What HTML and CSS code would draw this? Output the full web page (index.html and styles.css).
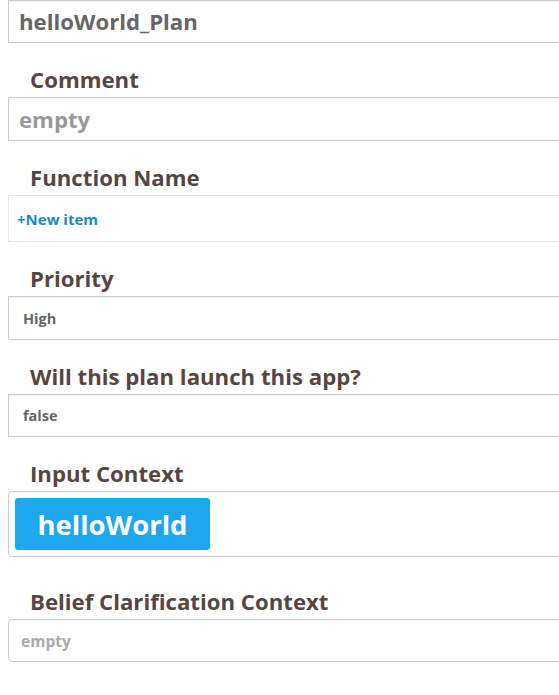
FILE: index.html
```html
<!DOCTYPE html>
<html lang="en">
<head>
    <meta charset="UTF-8">
    <title>Plan</title>
    <link rel="stylesheet" href="styles.css">
</head>
<body>
    <div class="plan-form">
        <div class="field big title">helloWorld_Plan</div>

        <div class="label">Comment</div>
        <div class="field big empty">empty</div>

        <div class="label">Function Name</div>
        <div class="field list">
            <a href="#" class="new-item">+New item</a>
        </div>

        <div class="label">Priority</div>
        <div class="field small tall">High</div>

        <div class="label">Will this plan launch this app?</div>
        <div class="field small">false</div>

        <div class="label">Input Context</div>
        <div class="field chips">
            <span class="chip">helloWorld</span>
        </div>

        <div class="label belief">Belief Clarification Context</div>
        <div class="field small empty rounded">empty</div>
    </div>
</body>
</html>
```

FILE: styles.css
```css
html, body {
    overflow: hidden;
}

body {
    margin: 0;
    padding: 0;
    font-family: 'Open Sans', sans-serif;
    font-weight: bold;
    background: #fff;
}

.plan-form {
    width: 620px;
    padding-left: 8px;
}

/* Labels */
.label {
    font-size: 22.2px;
    line-height: 28px;
    color: #574542;
    padding-left: 22px;
    margin-top: 23px;
    margin-bottom: 3px;
    white-space: nowrap;
}

.label.belief {
    margin-top: 31px;
}

/* Field boxes */
.field {
    box-sizing: border-box;
    border: 1px solid #cdcdcd;
    box-shadow: inset 0 1px 2px rgba(0, 0, 0, 0.06);
    color: #666;
    display: flex;
    align-items: center;
}

.field.big {
    height: 44px;
    font-size: 22.2px;
    padding-left: 10px;
}

.field.big.title {
    height: 43px;
}

.field.big.empty {
    color: #999;
}

.field.small {
    height: 43px;
    font-size: 14.5px;
    padding-left: 14px;
}

.field.small.tall {
    height: 44px;
}

.field.small.empty {
    color: #aaa;
    font-size: 15.5px;
    padding-left: 12px;
}

.field.rounded {
    border-radius: 4px;
}

.field.list {
    height: 47px;
    border-color: #e6e6e6;
    box-shadow: none;
    padding-left: 8px;
}

.new-item {
    color: #1a8cc0;
    font-size: 15px;
    text-decoration: none;
}

.field.chips {
    height: 66px;
    border-radius: 4px;
    padding-left: 6px;
}

.chip {
    box-sizing: border-box;
    width: 195px;
    height: 52px;
    background-color: #1ea7ec;
    color: #fff;
    font-size: 27.5px;
    border-radius: 3px;
    display: flex;
    align-items: center;
    justify-content: center;
}
```
